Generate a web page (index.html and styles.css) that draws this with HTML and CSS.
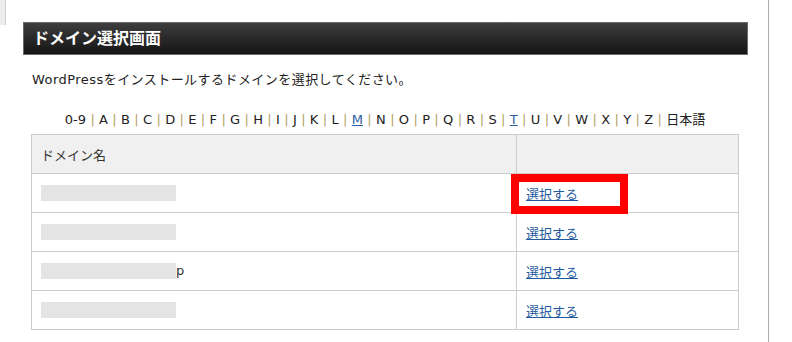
FILE: index.html
```html
<!DOCTYPE html>
<html lang="ja">
  <head>
    <meta charset="utf-8" />
    <title>ドメイン選択画面</title>
    <link rel="stylesheet" href="styles.css">
  </head>
  <body>
    <div class="side"></div>
    <div class="page">
      <h2 class="panel-title">ドメイン選択画面</h2>
      <p class="lead">WordPressをインストールするドメインを選択してください。</p>

      <div class="index-nav">
        0-9 <span class="sep">|</span> A <span class="sep">|</span> B <span class="sep">|</span> C <span class="sep">|</span> D <span class="sep">|</span> E <span class="sep">|</span> F <span class="sep">|</span> G <span class="sep">|</span> H <span class="sep">|</span> I <span class="sep">|</span> J <span class="sep">|</span> K <span class="sep">|</span> L <span class="sep">|</span> <a href="#m">M</a> <span class="sep">|</span> N <span class="sep">|</span> O <span class="sep">|</span> P <span class="sep">|</span> Q <span class="sep">|</span> R <span class="sep">|</span> S <span class="sep">|</span> <a href="#t">T</a> <span class="sep">|</span> U <span class="sep">|</span> V <span class="sep">|</span> W <span class="sep">|</span> X <span class="sep">|</span> Y <span class="sep">|</span> Z <span class="sep">|</span> 日本語
      </div>

      <table class="domain-table">
        <thead>
          <tr>
            <th class="col-name">ドメイン名</th>
            <th></th>
          </tr>
        </thead>
        <tbody>
          <tr>
            <td><span class="masked"></span></td>
            <td class="marked"><a href="#">選択する</a><span class="highlight"></span></td>
          </tr>
          <tr>
            <td><span class="masked"></span></td>
            <td><a href="#">選択する</a></td>
          </tr>
          <tr>
            <td><span class="masked"></span>p</td>
            <td><a href="#">選択する</a></td>
          </tr>
          <tr>
            <td><span class="masked"></span></td>
            <td><a href="#">選択する</a></td>
          </tr>
        </tbody>
      </table>
    </div>
  </body>
</html>
```

FILE: styles.css
```css
* {
  margin: 0;
  padding: 0;
  box-sizing: border-box;
}

body {
  font-family: 'DejaVu Sans', 'Noto Sans CJK JP', sans-serif;
  font-size: 13px;
  color: #333;
  background: #fff;
  display: flex;
  align-items: flex-start;
}

.side {
  width: 6px;
  height: 25px;
  background: #ececec;
  border-right: 1px solid #cfcfcf;
}

.page {
  flex: none;
  width: 763px;
  min-height: 100vh;
  border-right: 1px solid #aaa;
  padding: 22px 0 0 17px;
}

.panel-title {
  width: 725px;
  height: 33px;
  border: 1px solid #6a6a6a;
  background: linear-gradient(#3d3d3d, #151515);
  color: #fff;
  font-size: 16px;
  font-weight: bold;
  line-height: 31px;
  padding-left: 9px;
}

.lead {
  margin-top: 15px;
  padding-left: 9px;
  line-height: 20px;
  letter-spacing: 0.45px;
  color: #222;
}

.index-nav {
  width: 708px;
  margin: 20px 0 0 8px;
  line-height: 20px;
  text-align: center;
  word-spacing: 0.2px;
  color: #222;
}

.index-nav .sep {
  color: #b39f63;
}

.index-nav a {
  color: #2a5f9e;
}

.domain-table {
  width: 708px;
  margin: 4px 0 0 8px;
  border-collapse: collapse;
  border: 1px solid #ccc;
}

.domain-table th,
.domain-table td {
  height: 39px;
  border: 1px solid #ccc;
  padding: 0 9px;
  text-align: left;
  font-weight: normal;
  vertical-align: middle;
}

.domain-table th {
  background: #f0f0f0;
}

.domain-table .col-name {
  width: 485px;
}

.domain-table a {
  color: #1f5a9e;
  text-decoration: underline;
}

.masked {
  display: inline-block;
  width: 135px;
  height: 16px;
  background: #e4e4e4;
  vertical-align: middle;
}

.marked {
  position: relative;
}

.highlight {
  position: absolute;
  left: -6px;
  top: 0;
  width: 117px;
  height: 40px;
  border: 8px solid #f00;
}
```
